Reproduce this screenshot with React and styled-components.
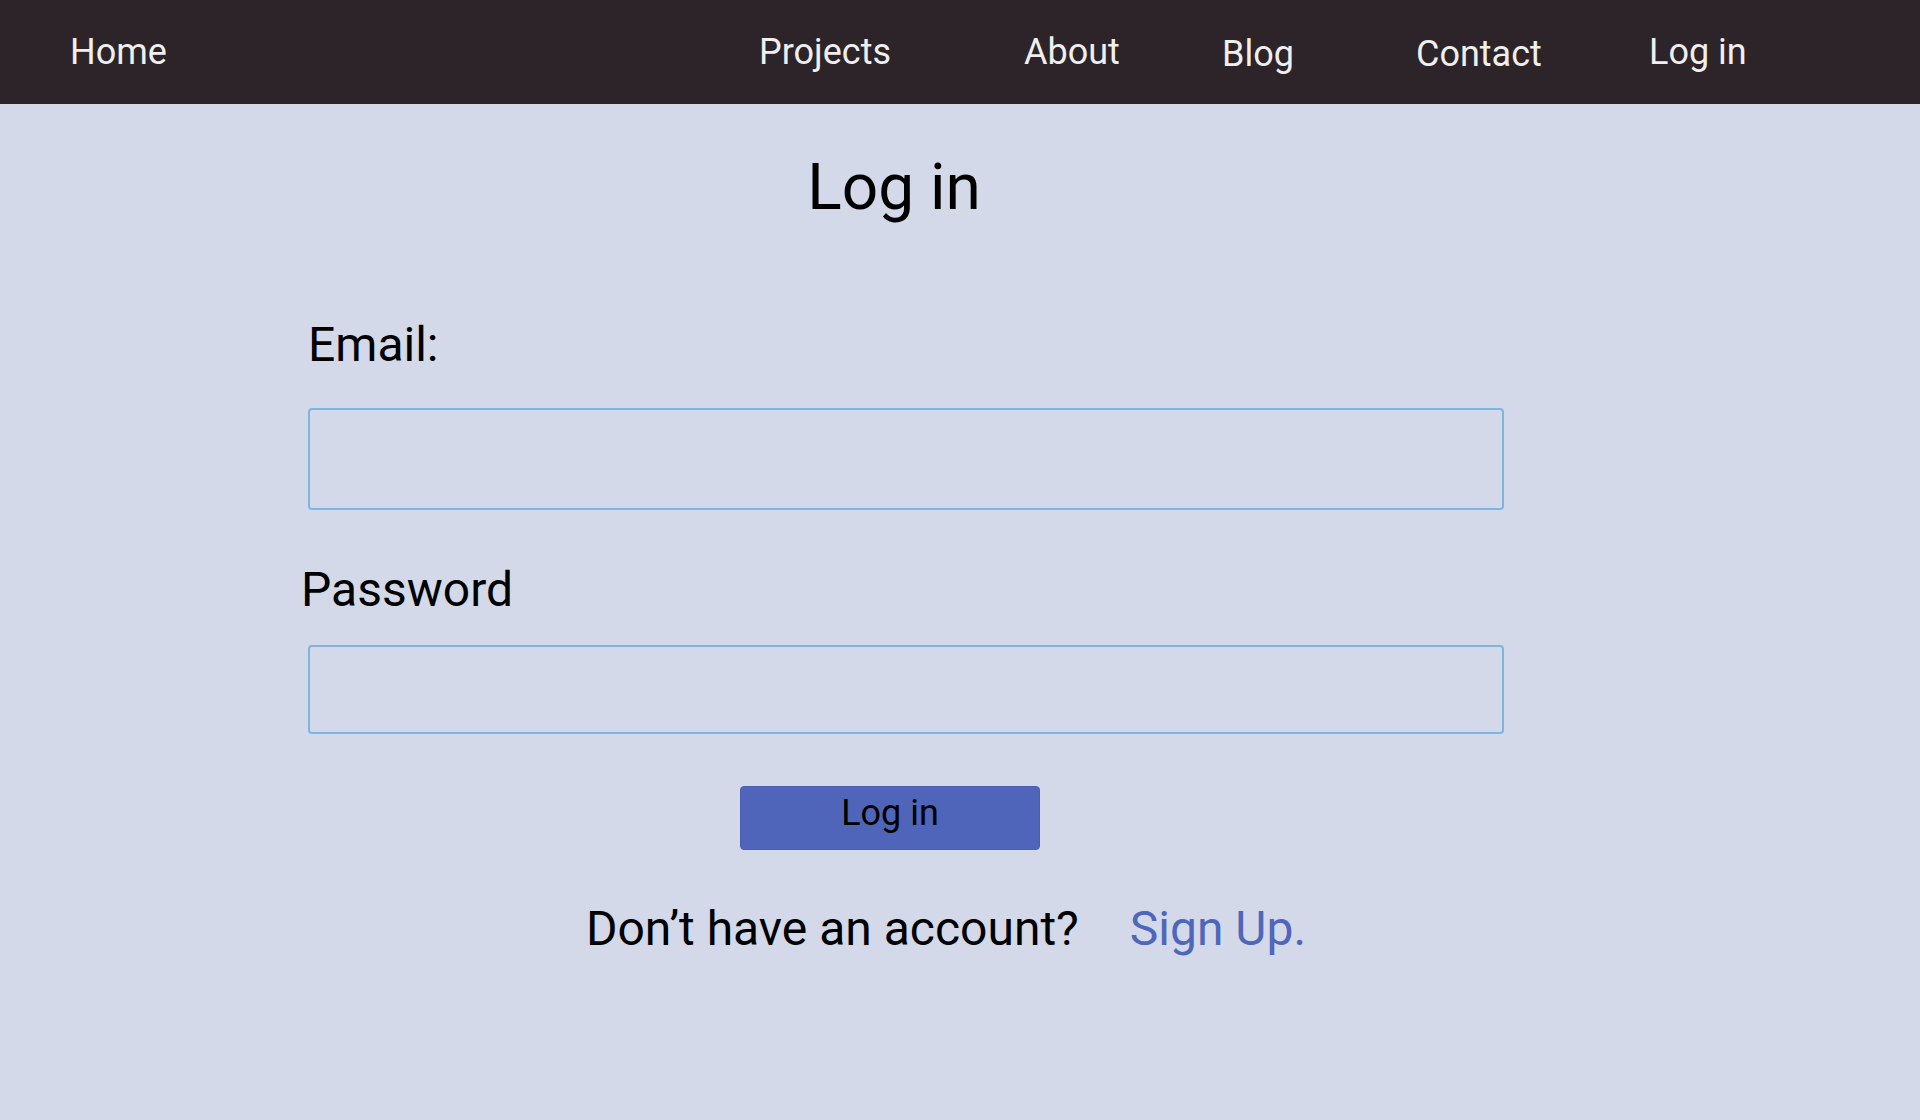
import React from "react";
import styled, { createGlobalStyle } from "styled-components";

const GlobalStyle = createGlobalStyle`
  html, body {
    margin: 0;
    padding: 0;
    background: #d3d9e9;
    font-family: Roboto, "Liberation Sans", sans-serif;
  }
`;

const Page = styled.div`
  min-height: 1120px;
  display: flex;
  flex-direction: column;
`;

const Navbar = styled.nav`
  height: 104px;
  box-sizing: border-box;
  background: #2c2428;
  padding: 34px 0 0 70px;
  display: grid;
  grid-template-columns: 689px 265px 198px 194px 233px auto;
  align-items: start;
`;

const NavLink = styled.a`
  color: #efefef;
  font-size: 36px;
  line-height: 36px;
  text-decoration: none;
  white-space: nowrap;
  margin-top: ${(p) => (p.$low ? "2px" : "0")};
`;

const Main = styled.main`
  flex: 1;
  padding: 52px 0 0 308px;
`;

const Form = styled.form`
  width: 1196px;
  display: flex;
  flex-direction: column;
`;

const Title = styled.h1`
  margin: 0 24px 101px 0;
  font-size: 64px;
  line-height: 64px;
  font-weight: 400;
  text-align: center;
  color: #000;
`;

const Label = styled.label`
  font-size: 48px;
  line-height: 48px;
  color: #000;
  margin-left: ${(p) => p.$shift || 0}px;
  margin-bottom: ${(p) => p.$gap}px;
`;

const Input = styled.input`
  box-sizing: border-box;
  width: 100%;
  height: ${(p) => p.$h}px;
  margin-bottom: ${(p) => p.$gap}px;
  background: transparent;
  border: 2px solid #7db4e0;
  border-radius: 4px;
  outline: none;
  font-size: 32px;
  font-family: inherit;
`;

const Submit = styled.button`
  box-sizing: border-box;
  width: 300px;
  height: 64px;
  margin: 0 0 55px 432px;
  padding: 8px 0 20px;
  background: #4f65b9;
  border: 1px solid #4a5fb3;
  border-radius: 4px;
  color: #000;
  font-family: inherit;
  font-size: 36px;
  line-height: 36px;
`;

const SignupRow = styled.p`
  margin: 0;
  padding-left: 80px;
  display: flex;
  justify-content: center;
  gap: 51px;
  font-size: 48px;
  line-height: 48px;
  color: #000;
`;

const SignupLink = styled.a`
  color: #4f66bb;
  text-decoration: none;
`;

export default function App() {
  return (
    <Page>
      <GlobalStyle />
      <Navbar>
        <NavLink href="#">Home</NavLink>
        <NavLink href="#">Projects</NavLink>
        <NavLink href="#">About</NavLink>
        <NavLink href="#" $low>Blog</NavLink>
        <NavLink href="#" $low>Contact</NavLink>
        <NavLink href="#">Log in</NavLink>
      </Navbar>
      <Main>
        <Form onSubmit={(e) => e.preventDefault()}>
          <Title>Log in</Title>
          <Label htmlFor="email" $gap={39}>Email:</Label>
          <Input id="email" type="email" $h={102} $gap={56} />
          <Label htmlFor="password" $shift={-7} $gap={31}>Password</Label>
          <Input id="password" type="password" $h={89} $gap={52} />
          <Submit type="submit">Log in</Submit>
          <SignupRow>
            <span>Don’t have an account?</span>
            <SignupLink href="#">Sign Up.</SignupLink>
          </SignupRow>
        </Form>
      </Main>
    </Page>
  );
}
